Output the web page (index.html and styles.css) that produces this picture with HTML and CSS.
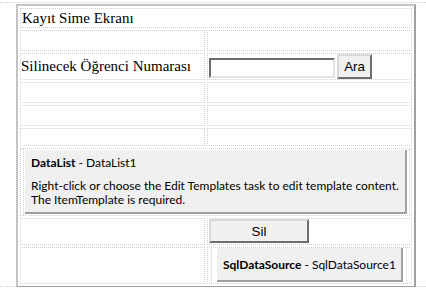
FILE: index.html
```html
<!DOCTYPE html>
<html lang="tr">
<head>
    <meta charset="UTF-8">
    <meta name="viewport" content="width=device-width, initial-scale=1.0">
    <title>Kayıt Silme Ekranı</title>
    <link rel="stylesheet" href="styles.css">
</head>
<body>
    <div class="form">
        <table class="frame">
            <colgroup>
                <col class="col-a">
                <col class="col-b">
            </colgroup>
            <tr class="row-title">
                <td colspan="2">Kayıt Sime Ekranı</td>
            </tr>
            <tr class="row-empty">
                <td></td>
                <td></td>
            </tr>
            <tr class="row-search">
                <td class="label">Silinecek Öğrenci Numarası</td>
                <td>
                    <div class="search">
                        <input type="text" class="textbox">
                        <button class="btn btn-ara">Ara</button>
                    </div>
                </td>
            </tr>
            <tr class="row-empty">
                <td></td>
                <td></td>
            </tr>
            <tr class="row-empty">
                <td></td>
                <td></td>
            </tr>
            <tr class="row-gap">
                <td></td>
                <td></td>
            </tr>
            <tr class="row-list">
                <td colspan="2">
                    <div class="holder">
                        <div class="control datalist">
                            <div class="ctl-head"><b>DataList</b> - DataList1</div>
                            <div>Right-click or choose the Edit Templates task to edit template content.</div>
                            <div>The ItemTemplate is required.</div>
                        </div>
                    </div>
                </td>
            </tr>
            <tr class="row-sil">
                <td></td>
                <td><button class="btn btn-sil">Sil</button></td>
            </tr>
            <tr class="row-source">
                <td></td>
                <td>
                    <div class="holder holder-right">
                        <div class="control sqlsource"><span><b>SqlDataSource</b> - SqlDataSource1</span></div>
                    </div>
                </td>
            </tr>
        </table>
    </div>
</body>
</html>
```

FILE: styles.css
```css
html, body {
    margin: 0;
    padding: 0;
    background: #fff;
}
body {
    font-family: "Liberation Serif", "Times New Roman", serif;
    color: #000;
}
.form {
    margin-top: 2px;
    border-top: 1px dotted #d0d0d0;
    border-bottom: 1px dotted #d0d0d0;
    height: 283px;
}
.frame {
    margin: 1px 0 0 16px;
    width: 400px;
    height: 282px;
    box-sizing: border-box;
    table-layout: fixed;
    border: 2px solid;
    border-color: #c4c4c4 #a0a0a0 #a0a0a0 #c4c4c4;
    border-collapse: separate;
    border-spacing: 2px;
}
.col-a {
    width: 185px;
}
.frame td {
    border: 1px dotted #d0d0d0;
    padding: 0;
    vertical-align: middle;
    font-size: 15px;
}
.row-title td {
    height: 18px;
    padding-left: 1px;
}
.row-empty td {
    height: 19px;
}
.row-search td {
    height: 24px;
}
.label {
    padding-left: 2px;
}
.row-gap td {
    height: 16px;
}
.search {
    display: flex;
    align-items: center;
    gap: 2px;
}
.textbox {
    width: 126px;
    height: 20px;
    box-sizing: border-box;
    margin: 3px 0 0 1px;
    border: 2px solid;
    border-color: #6d6d6d #e3e3e3 #e3e3e3 #6d6d6d;
    padding: 0;
}
.btn {
    font-family: "Liberation Sans", Arial, sans-serif;
    font-size: 13.33px;
    color: #000;
    background: #f0f0f0;
    border: 2px solid;
    border-color: #d8d8d8 #6e6e6e #6e6e6e #d8d8d8;
    padding: 0;
    margin: 0;
    box-sizing: border-box;
}
.btn-ara {
    width: 35px;
    height: 25px;
}
.row-list td {
    vertical-align: top;
}
.holder {
    margin-left: 2px;
    margin-right: 1px;
    border-left: 1px dotted #d0d0d0;
    border-right: 1px dotted #d0d0d0;
    padding: 1px 2px 1px 1px;
}
.control {
    font-family: Lato, "Noto Sans", sans-serif;
    font-size: 12px;
    background: #f0f0f0;
    border-right: 2px solid #a0a0a0;
    border-bottom: 2px solid #a0a0a0;
    box-sizing: border-box;
}
.datalist {
    height: 64px;
    padding: 6px 6px 0;
    line-height: 14px;
}
.ctl-head {
    margin-bottom: 9px;
}
.row-sil td {
    height: 25px;
    vertical-align: top;
}
.btn-sil {
    width: 100px;
    height: 24px;
    margin: 0 0 0 1px;
}
.row-source td {
    height: 35px;
    vertical-align: top;
}
.holder-right {
    margin-left: 3px;
    margin-right: 4px;
    padding: 0 3px 1px 5px;
}
.sqlsource {
    height: 34px;
    display: flex;
    align-items: center;
    padding-left: 6px;
}
```
